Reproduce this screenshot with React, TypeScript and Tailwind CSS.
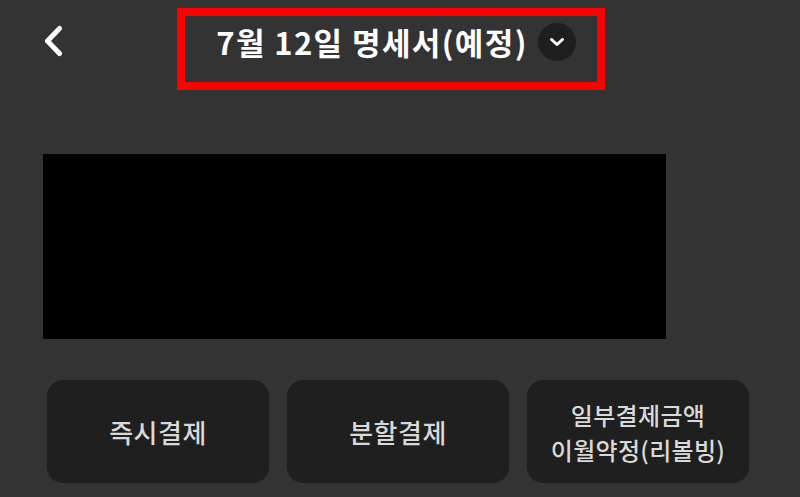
import React from "react";

export default function App() {
  const font = { fontFamily: '"Noto Sans CJK KR", "Noto Sans", sans-serif' };
  return (
    <div
      className="w-[800px] h-[497px] bg-[#333333] overflow-hidden flex flex-col"
      style={font}
    >
      <div className="flex items-start pt-[8px] h-[90px]">
        <div className="ml-[43px] mt-[17px] w-[20px] h-[32px]">
          <svg width="20" height="32" viewBox="0 0 20 32" fill="none">
            <path
              d="M16.5 3.5 L4.5 16 L16.5 28.5"
              stroke="#ffffff"
              strokeWidth="5"
              strokeLinecap="round"
              strokeLinejoin="round"
            />
          </svg>
        </div>
        <div className="ml-[114px] w-[428px] h-[82px] border-[8px] border-[#ff0000] flex items-start justify-center pl-[26px] pr-[16px] pt-[6px]">
          <div className="flex items-center gap-[10px]">
            <span className="text-[31px] font-bold text-white leading-[40px] tracking-[1.4px]">
              7월 12일 명세서(예정)
            </span>
            <div className="w-[38px] h-[38px] rounded-full bg-[#1e1e1e] flex items-center justify-center">
              <svg width="16" height="12" viewBox="0 0 16 12" fill="none">
                <path
                  d="M2.5 3.5 L8 8.5 L13.5 3.5"
                  stroke="#ffffff"
                  strokeWidth="3"
                  strokeLinecap="round"
                  strokeLinejoin="round"
                />
              </svg>
            </div>
          </div>
        </div>
      </div>

      <div className="ml-[43px] mt-[64px] w-[623px] h-[185px] bg-black" />

      <div className="flex gap-[18px] ml-[47px] mt-[41px]">
        <button className="w-[222px] h-[103px] rounded-[16px] bg-[#1f1f1f] flex items-center justify-center text-[26px] tracking-[0.5px] font-medium text-[#d9d9d9]">
          즉시결제
        </button>
        <button className="w-[222px] h-[103px] rounded-[16px] bg-[#1f1f1f] flex items-center justify-center text-[26px] tracking-[0.5px] font-medium text-[#d9d9d9]">
          분할결제
        </button>
        <button className="w-[222px] h-[103px] rounded-[16px] bg-[#1f1f1f] flex flex-col items-center justify-center text-[24px] leading-[35px] tracking-[0.3px] font-medium text-[#d9d9d9]">
          <span>일부결제금액</span>
          <span>이월약정(리볼빙)</span>
        </button>
      </div>
    </div>
  );
}
